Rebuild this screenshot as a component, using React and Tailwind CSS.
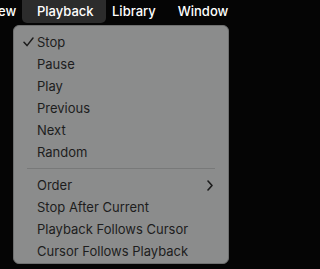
import React from "react";

const items1 = ["Stop", "Pause", "Play", "Previous", "Next", "Random"];
const items2 = ["Order", "Stop After Current", "Playback Follows Cursor", "Cursor Follows Playback"];

function Row({ label, checked, sub }) {
  return (
    <div className="relative flex h-[22px] items-center pl-[9px] pr-[15px]">
      <div className="flex w-[14px] items-center">
        {checked && (
          <svg width="11" height="10" viewBox="0 0 11 10" fill="none">
            <path d="M1 5.2 L4 8.6 L10 1" stroke="#1c1c1c" strokeWidth="1.5" strokeLinecap="round" strokeLinejoin="round" />
          </svg>
        )}
      </div>
      <span className="flex-1 text-[13px] leading-none text-[#1d1d1d]">{label}</span>
      {sub && (
        <svg width="6" height="11" viewBox="0 0 6 11" fill="none">
          <path d="M1 1 L5 5.5 L1 10" stroke="#1c1c1c" strokeWidth="1.6" strokeLinecap="round" strokeLinejoin="round" />
        </svg>
      )}
    </div>
  );
}

export default function App() {
  return (
    <div className="min-h-screen w-full overflow-hidden bg-[#050505]" style={{ fontFamily: 'Inter, "Liberation Sans", Arial, sans-serif' }}>
      <div className="w-[235px]">
        <div className="flex h-[23px] items-center whitespace-nowrap text-[13px] font-medium text-white">
          <span className="ml-[-2px] w-[24px]">ew</span>
          <div className="flex h-[23px] w-[84px] items-center rounded-b-[5px] bg-[#2c2c2c] pl-[15px]">Playback</div>
          <span className="ml-[6px]">Library</span>
          <span className="ml-[22px]">Window</span>
        </div>
        <div className="ml-[13px] mt-[2px] h-[239px] w-[216px] rounded-[6px] border border-[#6f7070] bg-[#8b8c8c] pt-[5px]">
          {items1.map((l, i) => (
            <Row key={l} label={l} checked={i === 0} />
          ))}
          <div className="mx-[13px] my-[5px] h-px bg-[#787979]" />
          {items2.map((l, i) => (
            <Row key={l} label={l} sub={i === 0} />
          ))}
        </div>
      </div>
    </div>
  );
}
